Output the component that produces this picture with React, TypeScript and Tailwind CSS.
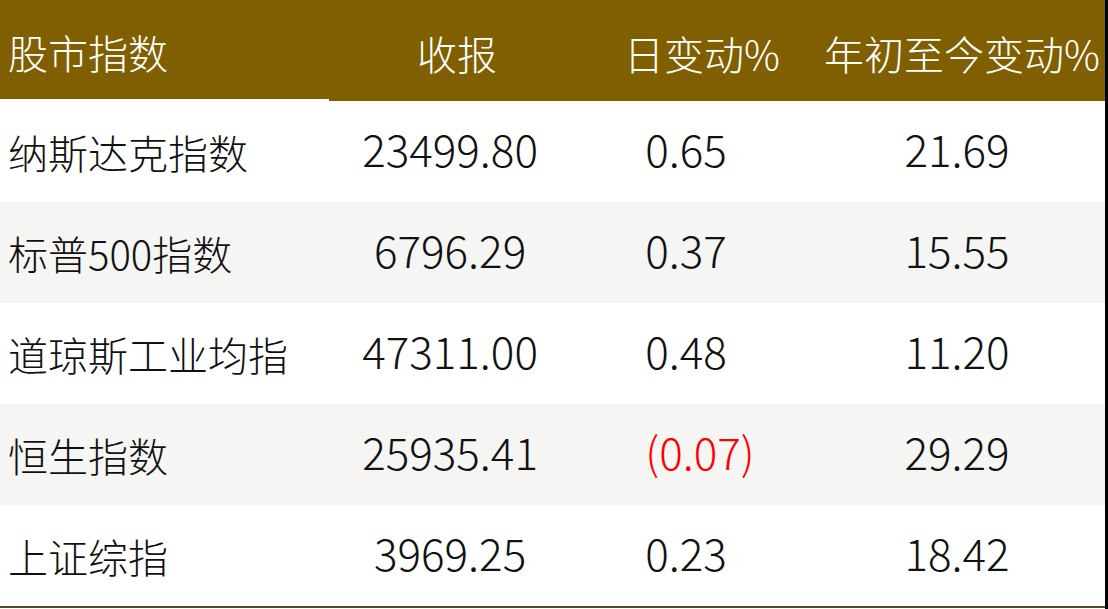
const rows = [
  { name: "纳斯达克指数", close: "23499.80", day: "0.65", ytd: "21.69" },
  { name: "标普500指数", close: "6796.29", day: "0.37", ytd: "15.55" },
  { name: "道琼斯工业均指", close: "47311.00", day: "0.48", ytd: "11.20" },
  { name: "恒生指数", close: "25935.41", day: "(0.07)", ytd: "29.29" },
  { name: "上证综指", close: "3969.25", day: "0.23", ytd: "18.42" },
];

const cjkFont = { fontFamily: '"Noto Sans CJK SC", sans-serif' };

// positives keep a blank slot where the closing paren of a negative would sit
function Num({ value, wide }: { value: string; wide?: boolean }) {
  const negative = value.startsWith("(");
  return (
    <span className={negative ? "text-[#ff0000]" : "text-[#111111]"}>
      {value}
      {!negative &&
        (wide ? <span className="inline-block w-[28px]" /> : <span className="invisible">)</span>)}
    </span>
  );
}

export default function App() {
  return (
    <div className="flex h-[609px] w-[1108px] bg-white font-light" style={cjkFont}>
      <div className="flex w-[1105px] flex-col">
        <div className="grid grid-cols-[329px_256px_234px_1fr] border-b-2 border-[#5a4a20]">
          <div className="flex h-[99px] items-center self-start bg-[#7f5f00] pl-2 pt-1 text-[40px] text-white">
            股市指数
          </div>
          <div className="flex h-[101px] items-center justify-center bg-[#7f5f00] pt-1 text-[40px] text-white">
            收报
          </div>
          <div className="flex h-[101px] items-center justify-center whitespace-nowrap bg-[#7f5f00] pt-1 text-[40px] text-white">
            日变动%
          </div>
          <div className="flex h-[101px] items-center justify-center whitespace-nowrap bg-[#7f5f00] pt-1 text-[40px] text-white">
            年初至今变动%
          </div>

          {rows.map((r, i) => (
            <div
              key={r.name}
              className={`col-span-4 grid h-[101px] grid-cols-subgrid items-center ${
                i % 2 === 1 ? "bg-[#f5f5f3]" : "bg-white"
              }`}
            >
              <div className="whitespace-nowrap pl-2 text-[40px] text-[#111111]">{r.name}</div>
              <div className="pb-2 text-center text-[44px]">
                <Num value={r.close} />
              </div>
              <div className="pb-2 pr-1 text-center text-[44px]">
                <Num value={r.day} wide />
              </div>
              <div className="pb-2 pl-1 text-center text-[44px]">
                <Num value={r.ytd} />
              </div>
            </div>
          ))}
        </div>
      </div>
      <div className="w-[3px] bg-black" />
    </div>
  );
}
